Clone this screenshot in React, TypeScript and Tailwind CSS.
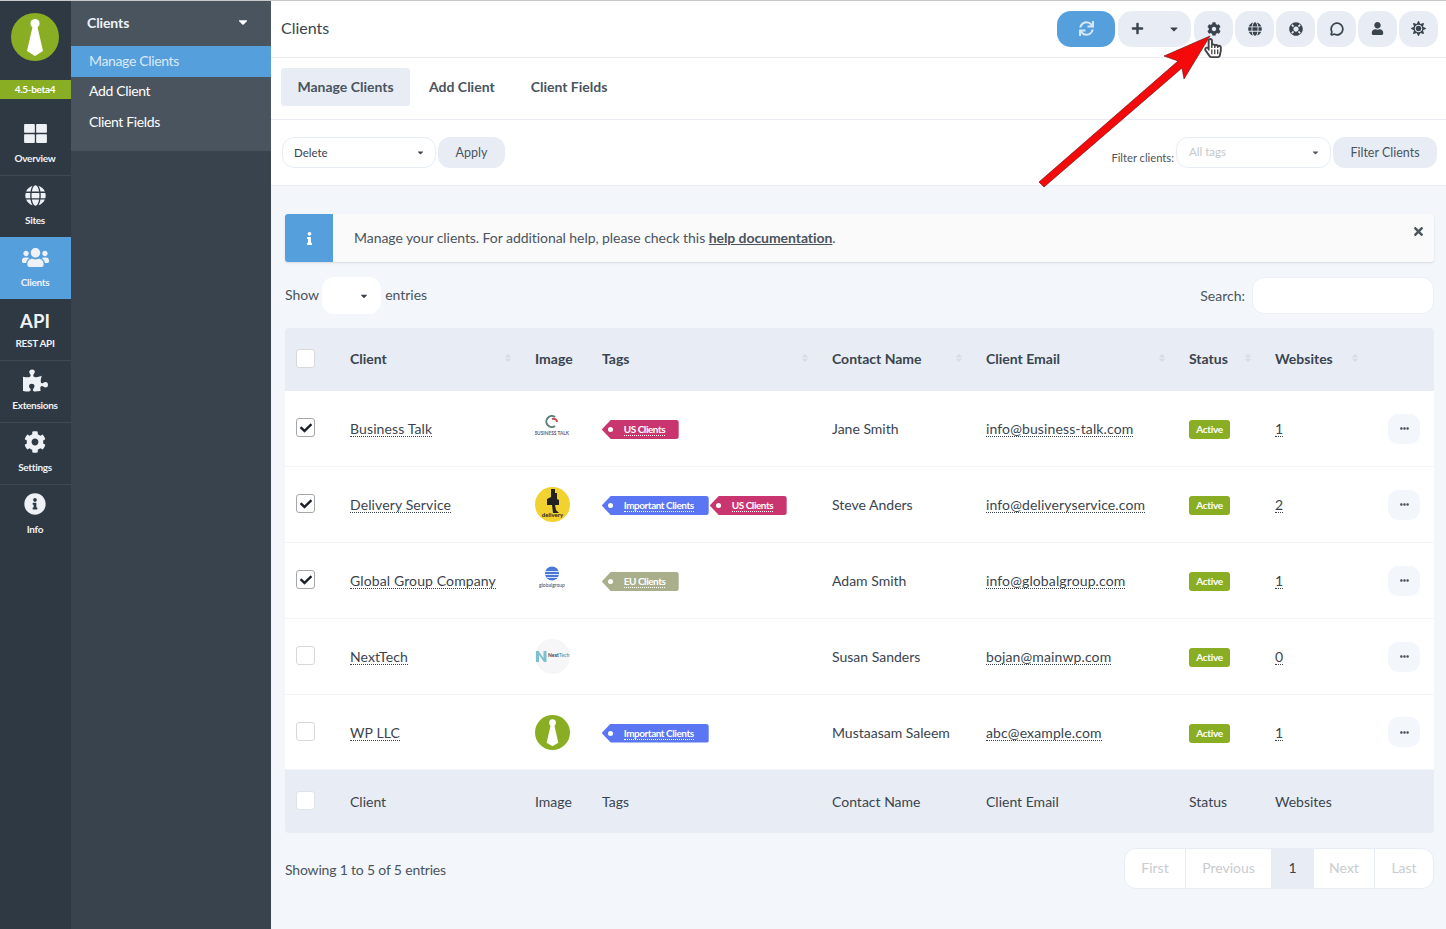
import React from 'react';
import { FaCaretDown, FaCheck, FaCog, FaEllipsisH, FaGlobe, FaHandPointer, FaInfo, FaInfoCircle, FaLifeRing, FaPlus, FaPuzzlePiece, FaRegHandPointer, FaSort, FaSun, FaSync, FaTimes, FaUser, FaUsers } from 'react-icons/fa';
import { MessageCircle } from 'lucide-react';

type Tag = { name: string; color: 'red' | 'blue' | 'olive' };

const tagColors = {
  red: 'bg-[#c9366f] w-[77px]',
  blue: 'bg-[#5a76f2] w-[107px]',
  olive: 'bg-[#a9ae8b] w-[77px]',
};

const clients: { name: string; logo: string; tags: Tag[]; contact: string; email: string; sites: number; checked: boolean }[] = [
  { name: 'Business Talk', logo: 'talk', tags: [{ name: 'US Clients', color: 'red' }], contact: 'Jane Smith', email: 'info@business-talk.com', sites: 1, checked: true },
  { name: 'Delivery Service', logo: 'delivery', tags: [{ name: 'Important Clients', color: 'blue' }, { name: 'US Clients', color: 'red' }], contact: 'Steve Anders', email: 'info@deliveryservice.com', sites: 2, checked: true },
  { name: 'Global Group Company', logo: 'global', tags: [{ name: 'EU Clients', color: 'olive' }], contact: 'Adam Smith', email: 'info@globalgroup.com', sites: 1, checked: true },
  { name: 'NextTech', logo: 'next', tags: [], contact: 'Susan Sanders', email: 'bojan@mainwp.com', sites: 0, checked: false },
  { name: 'WP LLC', logo: 'wp', tags: [{ name: 'Important Clients', color: 'blue' }], contact: 'Mustaasam Saleem', email: 'abc@example.com', sites: 1, checked: false },
];

function Tie({ size }: { size: number }) {
  return (
    <svg width={size} height={size} viewBox="0 0 48 48">
      <circle cx="24" cy="24" r="24" fill="#8aae23" />
      <circle cx="24" cy="10.5" r="4.6" fill="#fff" />
      <path d="M21.5 14h5l5.5 24-8 5-8-5z" fill="#fff" />
    </svg>
  );
}

function Logo({ kind }: { kind: string }) {
  if (kind === 'wp') return <Tie size={35} />;
  return (
    <svg width="35" height="35" viewBox="0 0 35 35" fontFamily="Lato, sans-serif">
      {kind === 'delivery' && (
        <>
          <circle cx="17.5" cy="17.5" r="17.5" fill="#f2d22f" />
          <path d="M16 2h4v4h2v6l2 1v5h-4l1 5 3 3h-6l-1-8h-5v-6l4-2V6h0z" fill="#222" />
          <text x="17.5" y="30" fontSize="6" fontWeight="700" textAnchor="middle" fill="#222">delivery</text>
        </>
      )}
      {kind === 'talk' && (
        <>
          <path d="M20 6a5.500 5.500 0 1 0 0 9" fill="none" stroke="#5d7d78" strokeWidth="2" />
          <path d="M17 8a3.500 3.500 0 0 1 5 3" fill="none" stroke="#c94b4b" strokeWidth="2" />
          <text x="16.500" y="24" fontSize="4.800" fontWeight="700" textAnchor="middle" fill="#667">BUSINESS TALK</text>
        </>
      )}
      {kind === 'global' && (
        <>
          <circle cx="17" cy="10.500" r="7" fill="#4a78d6" />
          <path d="M10 8.500h14M10 11.500h14M12 14.500h11" stroke="#dbe6fa" strokeWidth="1" />
          <text x="17" y="23.500" fontSize="5" textAnchor="middle" fill="#445">globalgroup</text>
        </>
      )}
      {kind === 'next' && (
        <>
          <circle cx="17.5" cy="17.5" r="17.5" fill="#f6f6f9" />
          <path d="M1 23V12h2.500l5 7v-7h3v11H9l-5-7v7z" fill="#7cc0cc" />
          <text x="13" y="17.500" fontSize="5" fontWeight="700" fill="#345">Next</text>
          <text x="24" y="17.500" fontSize="5" fontWeight="700" fill="#5aa9b8">Tech</text>
        </>
      )}
    </svg>
  );
}

function NavItem({ label, icon, pad = 'pt-[7px] h-[62px] border-b border-[#404a54]', active }: { label: string; icon: React.ReactNode; pad?: string; active?: boolean }) {
  return (
    <div className={`flex flex-col items-center pr-[1px] ${pad} ${active ? 'bg-[#559fdd]' : ''}`}>
      <div className="h-[24px] flex items-center justify-center text-[#eef2f7]">{icon}</div>
      <div className="mt-[6px] text-[10px] leading-[14px] font-bold tracking-[-0.3px] text-[#eef2f7]">{label}</div>
    </div>
  );
}

function Sidebar() {
  return (
    <div className="w-[71px] shrink-0 bg-[#2e3943]">
      <div className="h-[79px] pt-[12px] pr-[1px] flex justify-center"><Tie size={48} /></div>
      <div className="h-[19px] bg-[#8aae23] pr-[1px] text-center text-[10px] leading-[19px] font-bold tracking-[-0.3px] text-white">4.5-beta4</div>
      <div className="flex flex-col items-center pr-[1px] border-b border-[#404a54] h-[77px] pt-[25px]">
        <svg width="23" height="19" viewBox="0 0 24 20" fill="#eef2f7">
          <rect width="11.300" height="9.300" rx="1" />
          <rect x="12.700" width="11.300" height="9.300" rx="1" />
          <rect y="10.700" width="11.300" height="9.300" rx="1" />
          <rect x="12.700" y="10.700" width="11.300" height="9.300" rx="1" />
        </svg>
        <div className="mt-[8px] text-[10px] leading-[14px] font-bold tracking-[-0.3px] text-[#eef2f7]">Overview</div>
      </div>
      <NavItem label="Sites" pad="pt-[7px] h-[61px]" icon={<FaGlobe size={21} />} />
      <NavItem label="Clients" active pad="pt-2 h-[62px]" icon={<FaUsers size={27} />} />
      <div className="flex flex-col items-center pr-[1px] border-b border-[#404a54] h-[62px] pt-[10px]">
        <div className="text-[18.500px] leading-[24px] font-bold text-[#eef2f7]">API</div>
        <div className="mt-[3px] text-[10px] leading-[14px] font-bold tracking-[-0.3px] text-[#eef2f7]">REST API</div>
      </div>
      <NavItem label="Extensions" icon={<FaPuzzlePiece size={25} />} />
      <NavItem label="Settings" icon={<FaCog size={22} />} />
      <NavItem label="Info" pad="pt-[7px] h-[62px]" icon={<FaInfoCircle size={22} />} />
    </div>
  );
}

function SubMenu() {
  return (
    <div className="w-[200px] shrink-0 bg-[#39434d]">
      <div className="h-[45px] bg-[#4a545e] pl-[16px] pr-[21px] flex items-center justify-between text-white">
        <span className="text-[14px] font-bold tracking-[-0.1px] text-[#eef2f7] mb-[2px]">Clients</span>
        <FaCaretDown size={14} className="mb-[4px]" />
      </div>
      <div className="bg-[#4a545e] h-[105px] text-[14px] tracking-[-0.35px]">
        <div className="h-[31px] bg-[#559fdd] pl-[18px] leading-[30px] text-[#dce9f5]">Manage Clients</div>
        <div className="h-[30px] pl-[18px] leading-[28px] text-white">Add Client</div>
        <div className="h-[31px] pl-[18px] leading-[30px] text-white">Client Fields</div>
      </div>
    </div>
  );
}

function TopButton({ children }: { children: React.ReactNode }) {
  return <div className="w-[39px] h-[36px] rounded-[14px] bg-[#e8edf5] flex items-center justify-center text-[#3a444e]">{children}</div>;
}

function TopBar() {
  return (
    <div className="h-[57px] flex items-center justify-between pl-[10px] pr-[8px] border-b border-[#e9edf3] bg-white">
      <div className="text-[16px] text-[#3a444e] mb-[2px]">Clients</div>
      <div className="flex gap-[2px] mb-[1px]">
        <div className="w-[58px] h-[36px] rounded-[14px] bg-[#559fdd] flex items-center justify-center text-[#d5e7f7] mr-[1px]"><FaSync size={15} /></div>
        <div className="w-[73px] h-[36px] rounded-[14px] bg-[#e8edf5] flex items-center justify-between pl-[13px] pr-[11px] text-[#3a444e] mr-[1px]">
          <FaPlus size={13} />
          <FaCaretDown size={12} />
        </div>
        <TopButton><FaCog size={14} /></TopButton>
        <TopButton><FaGlobe size={14} /></TopButton>
        <TopButton><FaLifeRing size={14} /></TopButton>
        <TopButton><MessageCircle size={14} strokeWidth={3} /></TopButton>
        <TopButton><FaUser size={13} /></TopButton>
        <TopButton><FaSun size={15} /></TopButton>
      </div>
    </div>
  );
}

function Tabs() {
  return (
    <div className="h-[62px] flex items-center pl-[10px] border-b border-[#e9edf3] bg-white text-[14px] font-bold text-[#4a545e]">
      <div className="h-[38px] w-[129px] mb-[3px] pb-[2px] rounded-[3px] bg-[#e8edf5] flex items-center justify-center">Manage Clients</div>
      <div className="ml-[19px] mb-[5px]">Add Client</div>
      <div className="ml-[36px] mb-[5px]">Client Fields</div>
    </div>
  );
}

function Actions() {
  return (
    <div className="h-[66px] flex items-center justify-between pl-[11px] pr-[9px] border-b border-[#e9edf3] bg-white">
      <div className="flex gap-[2px]">
        <div className="w-[154px] h-[31px] rounded-[12px] border border-[#e8edf5] flex items-center justify-between pl-[11px] pr-[10px] text-[11.500px] text-[#3a444e]">
          Delete <FaCaretDown size={9} />
        </div>
        <div className="w-[67px] h-[31px] pt-[2px] rounded-[12px] bg-[#e8edf5] flex items-center justify-center text-[12.500px] text-[#4a545e]">Apply</div>
      </div>
      <div className="flex items-center gap-[2px]">
        <div className="text-[11.200px] text-[#4a545e] mt-[12px]">Filter clients:</div>
        <div className="w-[155px] h-[31px] rounded-[12px] border border-[#e8edf5] flex items-center justify-between pl-[12px] pr-[10px] text-[11.500px] text-[#c4c8cd]">
          <span className="mb-[2px]">All tags</span> <FaCaretDown size={9} className="text-[#4a545e]" />
        </div>
        <div className="w-[104px] h-[31px] pt-[2px] rounded-[12px] bg-[#e8edf5] flex items-center justify-center text-[12.500px] text-[#4a545e]">Filter Clients</div>
      </div>
    </div>
  );
}

function Banner() {
  return (
    <div className="mt-[28px] h-[48px] flex rounded-[3px] bg-[#fafafa] shadow-[0_1px_2px_rgba(60,70,90,0.15)] relative">
      <div className="w-[48px] rounded-l-[3px] bg-[#559fdd] flex items-center justify-center text-white"><FaInfo size={13} /></div>
      <div className="pl-[21px] flex items-center text-[14px] tracking-[-0.06px] text-[#4a545e] mb-[1px]">
        <span>Manage your clients. For additional help, please check this <a className="font-bold underline">help documentation</a>.</span>
      </div>
      <FaTimes size={13} className="absolute right-[9px] top-[11px] text-[#4a545e]" />
    </div>
  );
}

function Check({ on, footer }: { on?: boolean; footer?: boolean }) {
  return (
    <div className={`ml-[11px] w-[19px] h-[19px] rounded-[3px] bg-white flex items-center justify-center border ${on ? 'border-[#a5a7aa]' : footer ? 'border-[#dfe3e8]' : 'border-[#d6d8da]'}`}>
      {on && <FaCheck size={12} className="text-[#1c222a]" />}
    </div>
  );
}

function Head({ label, sort = true, pr = 'pr-[9px]' }: { label: string; sort?: boolean; pr?: string }) {
  return (
    <th className={`pl-[13px] ${pr} text-left font-bold text-[14px] text-[#3a444e]`}>
      <div className="flex items-center justify-between mb-[3px]">
        <span>{label}</span>
        {sort && <FaSort size={10} className="text-[#d8dde5]" />}
      </div>
    </th>
  );
}

function TagLabel({ tag }: { tag: Tag }) {
  return (
    <div className={`relative h-[19px] rounded-r-[3px] text-white flex items-center pl-[22px] ${tagColors[tag.color]} [clip-path:polygon(0_50%,9px_0,100%_0,100%_100%,9px_100%)]`}>
      <span className="absolute left-[6px] top-[7px] w-[5px] h-[5px] rounded-full bg-white" />
      <span className="text-[10px] leading-[12px] font-bold tracking-[-0.45px] border-b border-dotted border-white">{tag.name}</span>
    </div>
  );
}

function Dotted({ children }: { children: React.ReactNode }) {
  return <a className="border-b border-dotted border-[#3a444e] leading-[15px] inline-block tracking-[0.12px]">{children}</a>;
}

const cellBorder = 'border-b border-[#f1f4f9]';

function ClientTable() {
  return (
    <table className="w-[1149px] table-fixed border-separate [border-spacing:0] text-[14px] text-[#3a444e]">
      <colgroup>
        <col className="w-[52px]" />
        <col className="w-[185px]" />
        <col className="w-[67px]" />
        <col className="w-[230px]" />
        <col className="w-[154px]" />
        <col className="w-[203px]" />
        <col className="w-[86px]" />
        <col className="w-[113px]" />
        <col className="w-[59px]" />
      </colgroup>
      <thead>
        <tr className="h-[63px] bg-[#e8edf5]">
          <th className="rounded-tl-[4px]"><div className="mb-[3px]"><Check /></div></th>
          <Head label="Client" />
          <Head label="Image" sort={false} />
          <Head label="Tags" />
          <Head label="Contact Name" />
          <Head label="Client Email" />
          <Head label="Status" />
          <Head label="Websites" pr="pr-[15px]" />
          <th className="rounded-tr-[4px]" />
        </tr>
      </thead>
      <tbody className="bg-white">
        {clients.map((c, i) => (
          <tr key={c.name} className={i === clients.length - 1 ? 'h-[75px]' : 'h-[76px]'}>
            <td className={cellBorder}><div className="mb-[2px]"><Check on={c.checked} /></div></td>
            <td className={`pl-[13px] ${cellBorder}`}><Dotted>{c.name}</Dotted></td>
            <td className={`pl-[13px] ${cellBorder}`}><Logo kind={c.logo} /></td>
            <td className={`pl-[12.700px] ${cellBorder}`}>
              <div className="flex gap-[1px] mt-[2px]">
                {c.tags.map(t => <TagLabel key={t.name} tag={t} />)}
              </div>
            </td>
            <td className={`pl-[13px] ${cellBorder}`}>{c.contact}</td>
            <td className={`pl-[13px] ${cellBorder}`}><Dotted>{c.email}</Dotted></td>
            <td className={`pl-[13px] ${cellBorder}`}>
              <div className="w-[41px] h-[19px] mt-[2px] rounded-[3px] bg-[#8aae23] text-white text-[10px] font-bold tracking-[-0.3px] flex items-center justify-center">Active</div>
            </td>
            <td className={`pl-[13px] ${cellBorder}`}><Dotted>{c.sites}</Dotted></td>
            <td className={`pl-[13px] ${cellBorder}`}>
              <div className="w-[32px] h-[30px] rounded-[10px] bg-[#f3f6fb] flex items-center justify-center text-[#4a545e]"><FaEllipsisH size={9} /></div>
            </td>
          </tr>
        ))}
      </tbody>
      <tfoot>
        <tr className="h-[63px] bg-[#e8edf5]">
          <td className="rounded-bl-[4px]"><div className="mb-[3px]"><Check footer /></div></td>
          <td className="pl-[13px]">Client</td>
          <td className="pl-[13px]">Image</td>
          <td className="pl-[13px]">Tags</td>
          <td className="pl-[13px]">Contact Name</td>
          <td className="pl-[13px]">Client Email</td>
          <td className="pl-[13px]">Status</td>
          <td className="pl-[13px]">Websites</td>
          <td className="rounded-br-[4px]" />
        </tr>
      </tfoot>
    </table>
  );
}

function Pagination() {
  const cell = 'h-full flex items-center justify-center border-r border-[#e8edf5] pb-[2px]';
  return (
    <div className="h-[41px] flex rounded-[12px] border border-[#e8edf5] bg-white text-[14px] text-[#c8cbcf] overflow-hidden">
      <div className={`${cell} w-[61px]`}>First</div>
      <div className={`${cell} w-[86px]`}>Previous</div>
      <div className={`${cell} w-[42px] bg-[#e8edf5] text-[#3a444e]`}>1</div>
      <div className={`${cell} w-[61px]`}>Next</div>
      <div className="h-full w-[58px] flex items-center justify-center pb-[2px]">Last</div>
    </div>
  );
}

function Content() {
  return (
    <div className="flex-1 bg-[#f3f7fb] pl-[14px] pr-[12px]">
      <Banner />
      <div className="mt-[15px] h-[37px] flex items-center justify-between text-[14px] text-[#4a545e]">
        <div className="flex items-center">
          <span className="mb-[2px]">Show</span>
          <div className="ml-[3px] w-[59px] h-[37px] rounded-[12px] bg-white flex items-center justify-end pr-[12px] text-[#3a444e]"><FaCaretDown size={10} /></div>
          <span className="ml-[4px] mb-[2px]">entries</span>
        </div>
        <div className="flex items-center">
          <span>Search:</span>
          <div className="ml-[7px] w-[182px] h-[37px] rounded-[12px] bg-white border border-[#eceff4]" />
        </div>
      </div>
      <div className="mt-[14px]"><ClientTable /></div>
      <div className="mt-[15px] flex items-center justify-between">
        <span className="text-[14px] tracking-[-0.18px] text-[#4a545e] mt-[2px]">Showing 1 to 5 of 5 entries</span>
        <Pagination />
      </div>
    </div>
  );
}

// red annotation arrow and the hand cursor sit over the page
function Annotation() {
  return (
    <>
      <svg className="absolute left-0 top-0 pointer-events-none" width="1446" height="200" viewBox="0 0 1446 200">
        <polygon points="1210,35 1164,55 1178,60 1039,181 1044,186 1182,67 1184,78" fill="#f40a0a" stroke="#5a0a0a" strokeWidth="0.600" />
      </svg>
      <div className="absolute left-[1203px] top-[37px] w-[18px] h-[22px] pointer-events-none">
        <FaHandPointer size={20} className="absolute left-0 top-0 text-white" />
        <FaRegHandPointer size={20} className="absolute left-0 top-0 text-[#444]" />
      </div>
    </>
  );
}

export default function App() {
  return (
    <div className="relative w-[1446px] h-[929px] overflow-hidden flex bg-white font-['Lato',sans-serif] border-t border-[#c9c9c9]">
      <Sidebar />
      <SubMenu />
      <div className="flex-1 flex flex-col min-w-0">
        <TopBar />
        <Tabs />
        <Actions />
        <Content />
      </div>
      <Annotation />
    </div>
  );
}
